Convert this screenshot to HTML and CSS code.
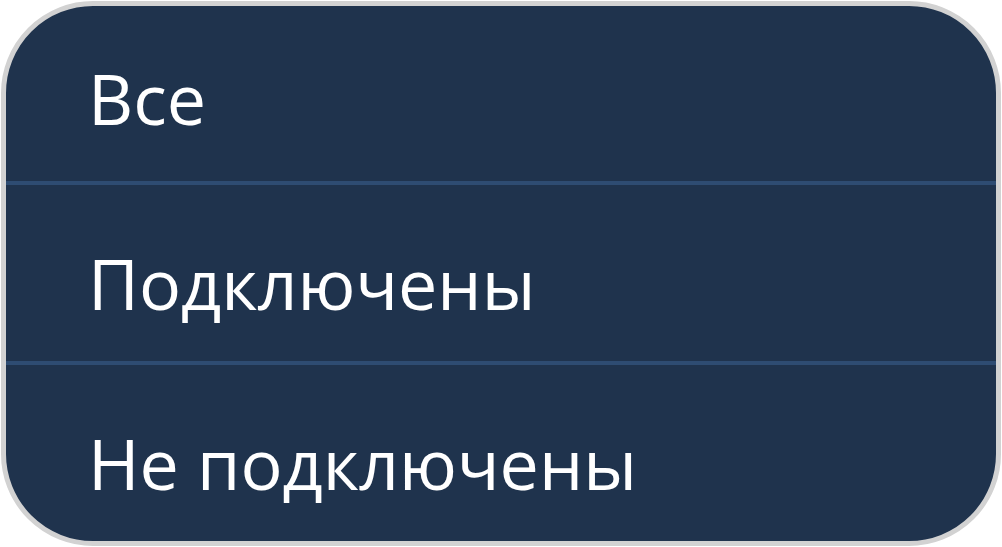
FILE: index.html
```html
<!DOCTYPE html>
<html lang="ru">
<head>
<meta charset="utf-8">
<link rel="stylesheet" href="styles.css">
</head>
<body>
<ul class="menu">
  <li class="item">Все</li>
  <li class="item">Подключены</li>
  <li class="item">Не подключены</li>
</ul>
</body>
</html>
```
FILE: styles.css
```css
html, body {
  margin: 0;
  padding: 0;
  background: #ffffff;
}
.menu {
  list-style: none;
  margin: 1px;
  padding: 0;
  width: 1000px;
  height: 545px;
  box-sizing: border-box;
  border: 5px solid #d2d2d2;
  border-radius: 92px;
  background: #1f334d;
  overflow: hidden;
  display: flex;
  flex-direction: column;
}
.item {
  height: 175px;
  flex: none;
  padding: 57px 0 0 82px;
  box-sizing: border-box;
  font-family: "Open Sans", "Noto Sans", sans-serif;
  font-size: 70px;
  line-height: 70px;
  color: #ffffff;
}
.item + .item {
  border-top: 4px solid #2e4c72;
  height: 180px;
  padding-top: 63px;
}
```
